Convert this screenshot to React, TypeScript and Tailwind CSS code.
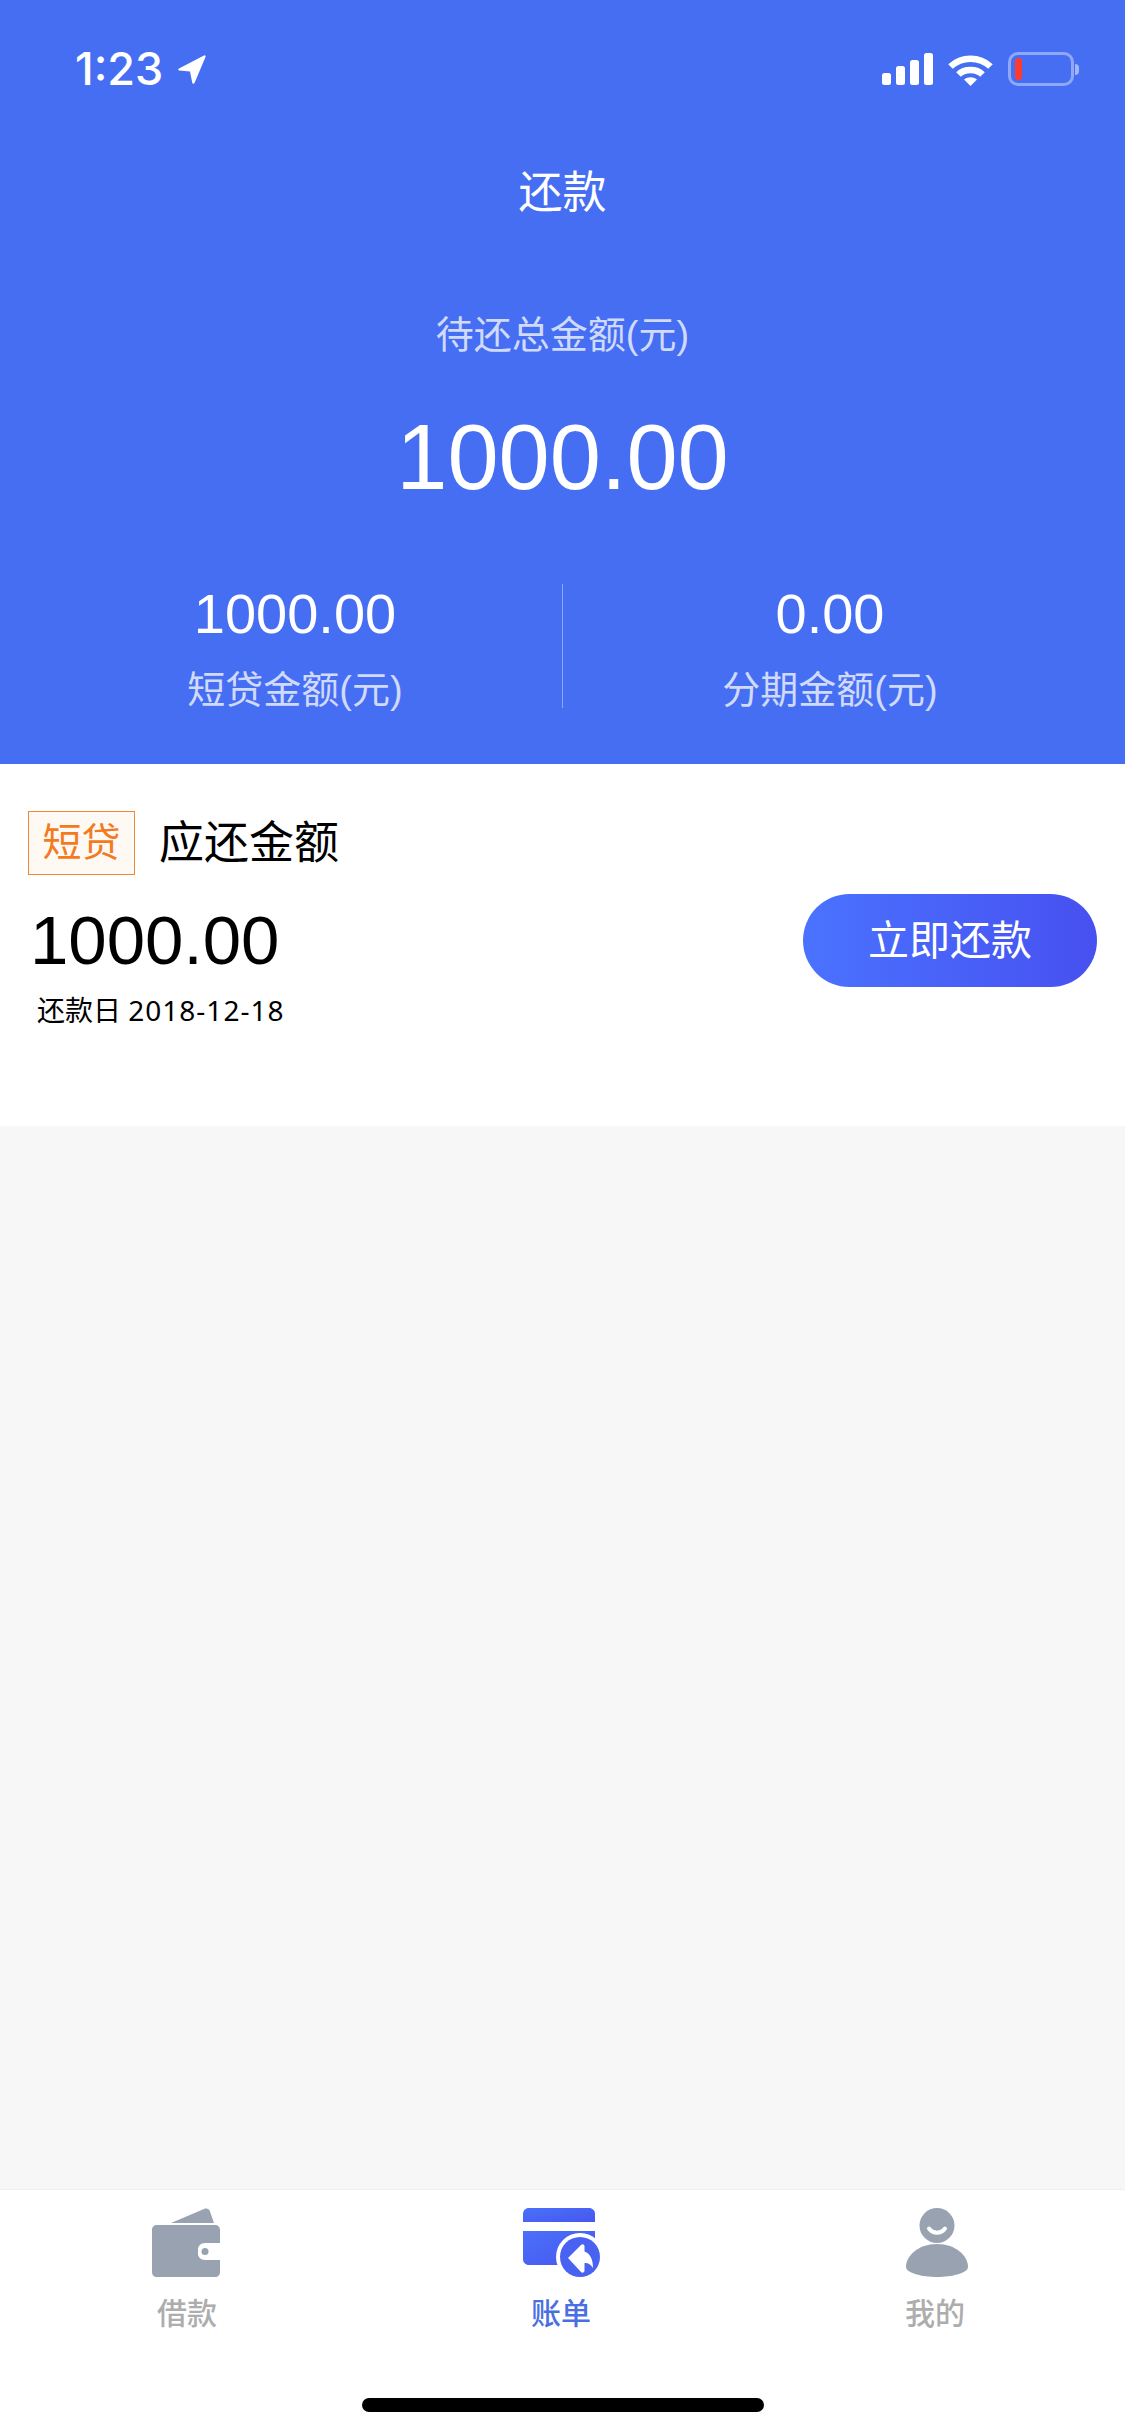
import React from 'react';

const tabs = [
  { label: '借款', active: false },
  { label: '账单', active: true },
  { label: '我的', active: false },
];

function SignalIcon() {
  return (
    <svg width="51" height="32" viewBox="0 0 51 32" fill="#fff">
      <rect x="0" y="20" width="9" height="12" rx="2.5" />
      <rect x="14" y="13" width="9" height="19" rx="2.5" />
      <rect x="28" y="7" width="9" height="25" rx="2.5" />
      <rect x="42" y="0" width="9" height="32" rx="2.5" />
    </svg>
  );
}

function WifiIcon() {
  return (
    <svg width="45" height="33" viewBox="0 0 45 33" fill="none" stroke="#fff" strokeWidth="6.5">
      <path d="M2.5 13.5C13.5 3 31.5 3 42.5 13.5" />
      <path d="M10.5 21.5C16.5 15.5 28.5 15.5 34.5 21.5" />
      <path d="M16 26.5L22.5 33L29 26.5C25 23.5 20 23.5 16 26.5Z" fill="#fff" stroke="none" />
    </svg>
  );
}

function WalletIcon() {
  return (
    <svg width="68" height="70" viewBox="0 0 68 70" fill="#98a2b1">
      <path d="M19 15L52 1C55 0 57 1 58 3.500L62 15Z" />
      <path d="M5 17H63C66 17 68 19 68 22V35H53C49 35 46 38 46 41V46C46 49 49 52 53 52H68V64C68 67 66 69 63 69H5C2 69 0 67 0 64V22C0 19 2 17 5 17Z" />
      <circle cx="53" cy="43.500" r="3.500" />
    </svg>
  );
}

function BillIcon() {
  return (
    <svg width="79" height="70" viewBox="0 0 79 70">
      <defs>
        <linearGradient id="bill-fill" x1="0" y1="0" x2="1" y2="1">
          <stop offset="0%" stopColor="#4a70fa" />
          <stop offset="100%" stopColor="#4757ee" />
        </linearGradient>
      </defs>
      <path d="M6 0H66C69.500 0 72 2.500 72 6V14H0V6C0 2.500 2.500 0 6 0Z" fill="url(#bill-fill)" />
      <path d="M0 23H72V51C72 54.500 69.500 57 66 57H6C2.500 57 0 54.500 0 51Z" fill="url(#bill-fill)" />
      <circle cx="57" cy="49" r="24" fill="#fff" />
      <circle cx="57" cy="49" r="20" fill="#4a62f2" />
      <path
        d="M45 50L58 37C59.500 35.500 61.500 36.500 61.500 38.500V43.500C67.500 45.500 70 52 70 60C67.500 56 64.500 54.500 61.500 55V62.500C61.500 64.500 59.500 65.500 58 64Z"
        fill="#fff"
      />
    </svg>
  );
}

function PersonIcon() {
  return (
    <svg width="62" height="70" viewBox="0 0 62 70" fill="#98a2b1">
      <circle cx="31" cy="17.500" r="17.500" />
      <path d="M23 20.500C27 26 35 26 39 20.500" fill="none" stroke="#fff" strokeWidth="4" strokeLinecap="round" />
      <path d="M31 36C50 36 62 48 62 59C62 65 46 69 31 69C16 69 0 65 0 59C0 48 12 36 31 36Z" />
    </svg>
  );
}

function TabIcon({ label }: { label: string }) {
  if (label === '借款') return <div className="pr-[2px]"><WalletIcon /></div>;
  if (label === '账单') return <div className="pl-[3px]"><BillIcon /></div>;
  return <div className="pl-[3px]"><PersonIcon /></div>;
}

export default function App() {
  return (
    <div className="flex h-[2436px] w-[1125px] flex-col overflow-hidden bg-[#f7f7f7] font-['Liberation_Sans','Noto_Sans_CJK_SC',sans-serif]">
      {/* Blue header */}
      <div className="flex h-[764px] flex-col bg-[#466ef3] text-white">
        <div className="flex h-[163px] items-start justify-between pt-[52px] pr-[46px] pl-[75px]">
          <div className="flex items-center gap-[15px]">
            <span className="font-['Inter',sans-serif] text-[45px] leading-[34px] font-medium">1:23</span>
            <svg width="28" height="29" viewBox="0 0 28 29" fill="#fff">
              <path d="M1 13.500L26 0.500C27 0 28 1 27.500 2L16.500 28C16 29 14.500 29 14.300 28L12 16.500L1 15.500C0 15.300 0 14 1 13.500Z" />
            </svg>
          </div>
          <div className="flex items-center gap-[15px]">
            <SignalIcon />
            <WifiIcon />
            <div className="flex items-center gap-[1px]">
              <div className="flex h-[34px] w-[66px] items-center rounded-[10px] border-[3px] border-white/40 pl-[4px]">
                <div className="h-[22px] w-[7px] rounded-full bg-[#ff3b30]" />
              </div>
              <div className="h-[11px] w-[4px] rounded-r-full bg-white/50" />
            </div>
          </div>
        </div>

        <div className="text-center text-[44px] leading-[60px]">还款</div>
        <div className="mt-[87px] text-center text-[38px] leading-[50px] text-white/75">待还总金额(元)</div>
        <div className="mt-[47px] text-center text-[92px] leading-[100px]">1000.00</div>

        <div className="mt-[77px] flex">
          <div className="flex w-[562px] flex-col items-center pl-[28px]">
            <div className="text-[56px] leading-[60px]">1000.00</div>
            <div className="mt-[21px] text-[38px] leading-[50px] text-white/75">短贷金额(元)</div>
          </div>
          <div className="h-[124px] w-px bg-white/40" />
          <div className="flex flex-1 flex-col items-center pr-[28px]">
            <div className="text-[56px] leading-[60px]">0.00</div>
            <div className="mt-[21px] text-[38px] leading-[50px] text-white/75">分期金额(元)</div>
          </div>
        </div>
      </div>

      {/* Repayment card */}
      <div className="h-[362px] bg-white pt-[47px] pr-[28px] pl-[28px]">
        <div className="flex h-[64px] items-center gap-[24px]">
          <div className="flex h-[64px] w-[107px] items-center justify-center border border-[#ee8a35] bg-[#fff9f4] text-[39px] text-[#f47a1f]">
            短贷
          </div>
          <div className="pt-[2px] text-[45px] leading-[60px] text-black">应还金额</div>
        </div>
        <div className="mt-[19px] flex h-[93px] items-center justify-between">
          <div className="pl-[2px] text-[69px] leading-[80px] text-black">1000.00</div>
          <button className="flex h-[93px] w-[294px] items-center justify-center rounded-full bg-gradient-to-r from-[#4a72ff] to-[#4750f0] pt-[2px] text-[41px] text-white">
            立即还款
          </button>
        </div>
        <div className="mt-[3px] pl-[9px] font-['Noto_Sans','Noto_Sans_CJK_SC',sans-serif] text-[28px] leading-[40px] text-black">
          还款日 <span className="tracking-[1px]">2018-12-18</span>
        </div>
      </div>

      <div className="flex-1" />

      {/* Tab bar */}
      <div className="h-[247px] border-t border-[#f0f0f0] bg-white">
        <div className="grid grid-cols-3 pt-[18px] pr-[3px]">
          {tabs.map(tab => (
            <div key={tab.label} className="flex flex-col items-center">
              <div className="flex h-[70px] items-start justify-center">
                <TabIcon label={tab.label} />
              </div>
              <div
                className={`mt-[16px] text-[30px] leading-[40px] font-medium ${tab.active ? 'text-[#4a6fe3]' : 'text-[#adadad]'}`}
              >
                {tab.label}
              </div>
            </div>
          ))}
        </div>
        <div className="mx-auto mt-[64px] h-[14px] w-[402px] rounded-full bg-black" />
      </div>
    </div>
  );
}
